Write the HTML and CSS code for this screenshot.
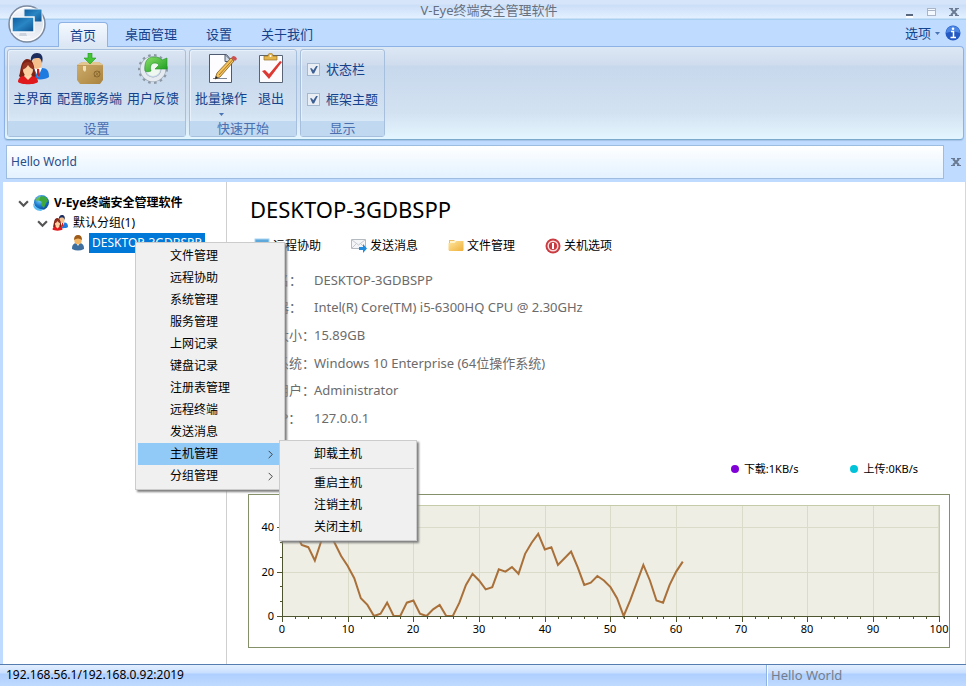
FILE: index.html
```html
<!DOCTYPE html>
<html lang="zh-CN">
<head>
<meta charset="utf-8">
<title>V-Eye终端安全管理软件</title>
<link rel="stylesheet" href="styles.css">
</head>
<body>
<svg class="defs" aria-hidden="true">
  <defs>
    <linearGradient id="screen" x1="0" y1="0" x2="1" y2="1"><stop offset="0" stop-color="#0f5c9c"/><stop offset=".5" stop-color="#2a86c4"/><stop offset="1" stop-color="#0a4f8e"/></linearGradient>
    <linearGradient id="orb" x1="0" y1="0" x2="0" y2="1"><stop offset="0" stop-color="#fafcff"/><stop offset=".5" stop-color="#dde3ec"/><stop offset="1" stop-color="#f4f7fb"/></linearGradient>
    <linearGradient id="green" x1="0" y1="0" x2="1" y2="1"><stop offset="0" stop-color="#8ee06a"/><stop offset="1" stop-color="#149a1c"/></linearGradient>
    <linearGradient id="box" x1="0" y1="0" x2="1" y2="1"><stop offset="0" stop-color="#d0ae6c"/><stop offset="1" stop-color="#a9823f"/></linearGradient>
    <radialGradient id="globe" cx=".4" cy=".3" r=".8"><stop offset="0" stop-color="#8fe0ff"/><stop offset=".5" stop-color="#1f7fd0"/><stop offset="1" stop-color="#073a85"/></radialGradient>
    <linearGradient id="folder" x1="0" y1="0" x2="1" y2="1"><stop offset="0" stop-color="#ffe7a0"/><stop offset="1" stop-color="#efb03a"/></linearGradient>
    <symbol id="users" viewBox="0 0 32 32">
      <path d="M15 24c0-6 2-9 6-9l4 0c5 0 7 3 7 9-3 3-13 3-17 1z" fill="#1f7be0"/>
      <path d="M17 15l4 9 4-9z" fill="#fff"/><path d="M20 16h2l1 6-2 2-1-2z" fill="#c22"/>
      <ellipse cx="20" cy="10" rx="5" ry="6" fill="#f6c08c"/>
      <path d="M14 9c-1-6 2-9 6-9s7 3 5 10c-1-3-1-4-3-5-3 0-5 0-6 1z" fill="#1c2c5c"/>
      <path d="M2 23C4 20 3 7 10 6c8 0 7 12 9 17l-4 3H5z" fill="#7c2314"/>
      <path d="M1 29c0-4 3-6 6-6h7c4 0 7 2 7 6-3 3-17 3-20 0z" fill="#e0191c"/>
      <path d="M7 23l4 4 4-4-2-3H9z" fill="#ffd9b0"/>
      <ellipse cx="11" cy="17" rx="5" ry="6" fill="#fcd0a0"/>
      <path d="M5 17c0-5 2-8 6-8s6 3 6 8c-2-1-5-3-6-5-1 2-3 4-6 5z" fill="#963321"/>
    </symbol>
  </defs>
</svg>

<header class="chrome">
  <div class="titlebar">
    <h1 class="title">V-Eye终端安全管理软件</h1>
    <div class="window-buttons">
      <button type="button" aria-label="最小化"><svg width="9" height="12"><path d="M1 11h7" stroke="#fff" stroke-width="2"/><path d="M1 9h7" stroke="#59677f" stroke-width="2"/></svg></button>
      <button type="button" aria-label="最大化"><svg width="9" height="12"><rect x=".5" y="2.5" width="8" height="7" fill="#f4f8ff" stroke="#a9b4c6"/><path d="M1 4.500h7" stroke="#a9b4c6"/></svg></button>
      <button type="button" aria-label="关闭"><svg width="10" height="12"><path d="M2 3l6 6M8 3L2 9" stroke="#697a92" stroke-width="2"/><path d="M0 2.500h4M6 2.500h4M0 9.500h4M6 9.500h4" stroke="#697a92"/></svg></button>
    </div>
  </div>
  <button class="orb" type="button" aria-label="应用菜单">
    <svg viewBox="0 0 38 38" width="38" height="38"><circle cx="19" cy="19" r="18" fill="url(#orb)" stroke="#7d8ba0" stroke-width="1.500"/><circle cx="19" cy="19" r="16.500" fill="none" stroke="#fff"/>
    <path d="M16 4h18v13H16z" fill="url(#screen)" stroke="#dfe9f4"/><path d="M4 12h22v15H4z" fill="url(#screen)" stroke="#f5f8fc" stroke-width="1.500"/><path d="M12 28h6l1 3h-8z" fill="#cbd3de"/><path d="M10 32h12" stroke="#f8fafc"/></svg>
  </button>
  <nav class="tabs">
    <a class="tab active" href="#">首页</a><a class="tab" href="#">桌面管理</a><a class="tab" href="#">设置</a><a class="tab" href="#">关于我们</a>
    <div class="options">
      <button type="button">选项 <svg width="5" height="3"><path d="M0 0h5L2.500 3z" fill="#4a75b5"/></svg></button>
      <button type="button" aria-label="信息"><svg width="16" height="16"><circle cx="8" cy="8" r="7.500" fill="#2459c4"/><path d="M1 8a7 7 0 0114 0q-7-3-14 0" fill="#4c86e4"/><path d="M6 6.500h2.500v6M5.500 12.500h5.500" stroke="#fff" stroke-width="1.500" fill="none"/><circle cx="8" cy="3.700" r="1.300" fill="#fff"/></svg></button>
    </div>
  </nav>
  <div class="ribbon">
    <section class="group">
      <div class="tools">
        <button class="tool" type="button"><svg class="icon"><use href="#users"/></svg>主界面</button>
        <button class="tool" type="button"><svg class="icon" viewBox="0 0 32 32"><path d="M3 12l5-3h17l4 3v15l-3 4H6l-3-4z" fill="url(#box)"/><path d="M3 12h26l-4-3H8z" fill="#e2c690"/><path d="M3 12h26v1H3z" fill="#c29c5a"/><path d="M9 13h3v4l-1 2-2-2z" fill="#efe0b8"/><circle cx="23" cy="21" r="3" fill="none" stroke="#8a6830"/><path d="M20 24l6-6M21 18l4 6" stroke="#8a6830" stroke-width=".7"/><path d="M14 0h4v5h4l-6 6-6-6h4z" fill="#45c436" stroke="#24971f" stroke-width=".6"/></svg>配置服务端</button>
        <button class="tool" type="button"><svg class="icon" viewBox="0 0 32 32"><circle cx="16" cy="16" r="13.500" fill="none" stroke="#8d98a5" stroke-width="3" stroke-dasharray="2.500 3.340"/><circle cx="16" cy="16" r="10.500" fill="none" stroke="#9aa4b0" stroke-width="5"/><circle cx="16" cy="16" r="10.500" fill="none" stroke="#e5eaf0" stroke-width="4"/><circle cx="16" cy="16" r="7" fill="#eef8ee"/><path d="M8 18C7 9 10 4 17 4c4 0 6 1 8 3l5-2v11H18l4-4c-1-1-2-2-4-2-5 0-5 5-4 8-2 1-5 1-6 0z" fill="url(#green)" stroke="#23912a" stroke-width=".6"/></svg>用户反馈</button>
      </div>
      <h2 class="caption">设置</h2>
    </section>
    <section class="group">
      <div class="tools">
        <button class="tool" type="button"><svg class="icon" viewBox="0 0 32 32"><path d="M4.500 1.500h17l5 6v22h-22z" fill="#fdfdff" stroke="#4e5a70"/><path d="M20 1.500v7h7z" fill="#cfd9e8" stroke="#4e5a70"/><path d="M8 25.500h14" stroke="#7c8798"/><path d="M12 20L26 5l3 3-14 16-5 2z" fill="#f3c25a" stroke="#7d5a22" stroke-width=".8"/><path d="M14 22L28 6.500" stroke="#ad7928"/><path d="M26 5l2-2q3 0 4 3l-2 2z" fill="#cc5050"/><path d="M10 26l1-3 2 2z" fill="#222"/></svg>批量操作<svg class="drop" width="5" height="3"><path d="M0 0h5L2.500 3z" fill="#4a75b5"/></svg></button>
        <button class="tool" type="button"><svg class="icon" viewBox="0 0 32 32"><path d="M4.500 2.500h23v27h-23z" fill="#fcfcff" stroke="#596477"/><path d="M9 3h4c0-4 5-4 5 0h4v4H9z" fill="#e5b64c" stroke="#96702a" stroke-width=".7"/><circle cx="15.500" cy="3" r="1" fill="#fff"/><path d="M7 18l3-1 4 4L25 8l2 1-13 17z" fill="#dd3934"/></svg>退出</button>
      </div>
      <h2 class="caption">快速开始</h2>
    </section>
    <section class="group">
      <div class="checks">
        <label><input type="checkbox" checked>状态栏</label>
        <label><input type="checkbox" checked>框架主题</label>
      </div>
      <h2 class="caption">显示</h2>
    </section>
  </div>
</header>

<div class="message">
  <p class="message-text">Hello World</p>
  <button type="button" aria-label="关闭消息"><svg width="10" height="9"><path d="M2 1l6 6M8 1L2 7" stroke="#697a92" stroke-width="2"/><path d="M0 .5h4M6 .5h4M0 7.500h4M6 7.500h4" stroke="#697a92"/></svg></button>
</div>

<main class="workspace">
  <aside class="sidebar">
    <ul class="tree">
      <li>
        <div class="node root"><svg class="arrow" viewBox="0 0 10 10"><path d="M1 3l4 4 4-4"/></svg>
          <svg class="small" viewBox="0 0 16 16"><circle cx="8.500" cy="7.500" r="7.500" fill="url(#globe)"/><path d="M8 1l5 1 2 4-2 2-2 5-3-3 1-3-4-2z" fill="#3fa83c"/><path d="M3 4l3-2 1 2-3 3z" fill="#66bd4c"/><path d="M0 8q4 7 11 6l-3 2q-8 0-8-8" fill="#5bbcf4"/></svg>
          <span>V-Eye终端安全管理软件</span></div>
        <ul>
          <li>
            <div class="node"><svg class="arrow" viewBox="0 0 10 10"><path d="M1 3l4 4 4-4"/></svg><svg class="small"><use href="#users"/></svg><span>默认分组(1)</span></div>
            <ul>
              <li class="host">
                <div class="node"><svg class="small" viewBox="0 0 16 16"><path d="M2 14c0-5 2-6 6-6s6 1 6 6q-6 3-12 0" fill="#3f6f9f"/><path d="M6 8l2 3 2-3z" fill="#f5ead0"/><circle cx="8" cy="5.500" r="3.700" fill="#f3b765"/><path d="M4 5q0-5 4-5t4 5q-4-3-8 0" fill="#9d5b19"/></svg><span class="selected">DESKTOP-3GDBSPP</span></div>
                <div class="menu context" role="menu">
                  <button role="menuitem">文件管理</button>
                  <button role="menuitem">远程协助</button>
                  <button role="menuitem">系统管理</button>
                  <button role="menuitem">服务管理</button>
                  <button role="menuitem">上网记录</button>
                  <button role="menuitem">键盘记录</button>
                  <button role="menuitem">注册表管理</button>
                  <button role="menuitem">远程终端</button>
                  <button role="menuitem">发送消息</button>
                  <div class="submenu-anchor">
                    <button class="current" role="menuitem">主机管理<svg viewBox="0 0 10 10"><path d="M3 1l4 4-4 4"/></svg></button>
                    <div class="menu submenu" role="menu">
                      <button role="menuitem">卸载主机</button>
                      <hr>
                      <button role="menuitem">重启主机</button>
                      <button role="menuitem">注销主机</button>
                      <button role="menuitem">关闭主机</button>
                    </div>
                  </div>
                  <button role="menuitem">分组管理<svg viewBox="0 0 10 10"><path d="M3 1l4 4-4 4"/></svg></button>
                </div>
              </li>
            </ul>
          </li>
        </ul>
      </li>
    </ul>
  </aside>

  <section class="detail">
    <h2 class="host-name">DESKTOP-3GDBSPP</h2>
    <div class="actions">
      <button type="button"><svg class="small" viewBox="0 0 16 16"><rect x="1" y="1" width="14" height="10" fill="#5da9dc" stroke="#a9d3f0"/><path d="M5 14h6M8 11v3" stroke="#789"/></svg>远程协助</button>
      <button type="button"><svg class="small" viewBox="0 0 16 16"><path d="M.5 1.500h14v9H.5z" fill="#f4f5f7" stroke="#b5bac0"/><path d="M1 2l6.500 5L14 2M1 10l4-4M14 10l-4-4" fill="none" stroke="#c5c9ce"/><path d="M8 9h4V6l4 4.500-4 4.500v-3H8z" fill="#218bdc"/></svg>发送消息</button>
      <button type="button"><svg class="small" viewBox="0 0 16 16"><path d="M1 2h5l1 1h8v10H1z" fill="#f0c064"/><path d="M2 3h12v4L8 8H2z" fill="#fff4c9"/><path d="M.5 5h6l2-2h7v9l-1 1h-13l-1-1z" fill="url(#folder)"/></svg>文件管理</button>
      <button type="button"><svg class="small" viewBox="0 0 16 16"><circle cx="8" cy="8" r="7.500" fill="#c93b40"/><circle cx="8" cy="8" r="4.800" fill="none" stroke="#f8dede" stroke-width="1.500"/><path d="M8 5v6" stroke="#fff" stroke-width="2"/></svg>关机选项</button>
    </div>
    <dl class="info">
      <dt>主机名：</dt><dd>DESKTOP-3GDBSPP</dd>
      <dt>处理器：</dt><dd>Intel(R) Core(TM) i5-6300HQ CPU @ 2.30GHz</dd>
      <dt>内存大小：</dt><dd>15.89GB</dd>
      <dt>操作系统：</dt><dd>Windows 10 Enterprise (64位操作系统)</dd>
      <dt>当前用户：</dt><dd>Administrator</dd>
      <dt>主机IP：</dt><dd>127.0.0.1</dd>
    </dl>
    <ul class="legend">
      <li><i class="dot down"></i>下载:1KB/s</li>
      <li><i class="dot up"></i>上传:0KB/s</li>
    </ul>
    <svg class="chart" viewBox="0 0 702 154" role="img" aria-label="网络流量">
      <rect class="frame" x=".5" y=".5" width="701" height="153"/>
      <rect class="plot" x="34.500" y="11.500" width="657" height="111"/>
      <path class="grid" d="M100.500 12v110M165.500 12v110M231.500 12v110M297.500 12v110M362.500 12v110M428.500 12v110M494.500 12v110M559.500 12v110M625.500 12v110M690.500 12v110M35 78.500h656M35 33.500h656"/>
      <g transform="translate(34 122) scale(6.570 -2.220)">
        <polyline class="series" points="0,42 1,44 2,38 3,32 4,31 5,25 6,34 7,40 8,33 9,27 10,22.500 11,17 12,8 13,5 14,0 15,1 16,6 17,0 18,0 19,6 20,7 21,1 22,0 23,3 24,5 25,0 26,0 27,6 28,14 29,19 30,16 31,12 32,13 33,21 34,20 35,22 36,19 37,28 38,33 39,37 40,30 41,31 42,23 43,26 44,29 45,22 46,14 47,15 48,18 49,16 50,13 51,8 52,0 53,7 54,15 55,23 56,16 57,7 58,6 59,14 60,20 61,24.500"/>
      </g>
      <path class="axis" d="M34.500 11v117M29 122.500h663M29 78.500h5M29 33.500h5M32 107.500h2M32 92.500h2M32 63.500h2M32 48.500h2M100.500 123v5M165.500 123v5M231.500 123v5M297.500 123v5M362.500 123v5M428.500 123v5M494.500 123v5M559.500 123v5M625.500 123v5M691.500 123v5"/>
      <path class="axis" d="M47.500 123v2M60.500 123v2M73.500 123v2M87.500 123v2M113.500 123v2M126.500 123v2M139.500 123v2M152.500 123v2M179.500 123v2M192.500 123v2M205.500 123v2M218.500 123v2M244.500 123v2M257.500 123v2M271.500 123v2M284.500 123v2M310.500 123v2M323.500 123v2M336.500 123v2M349.500 123v2M376.500 123v2M389.500 123v2M402.500 123v2M415.500 123v2M441.500 123v2M454.500 123v2M468.500 123v2M481.500 123v2M507.500 123v2M520.500 123v2M533.500 123v2M546.500 123v2M573.500 123v2M586.500 123v2M599.500 123v2M612.500 123v2M638.500 123v2M651.500 123v2M665.500 123v2M678.500 123v2"/>
      <g class="y-labels"><text x="26" y="37">40</text><text x="26" y="82">20</text><text x="26" y="126">0</text></g>
      <g class="x-labels"><text x="34" y="139">0</text><text x="100" y="139">10</text><text x="165" y="139">20</text><text x="231" y="139">30</text><text x="297" y="139">40</text><text x="362" y="139">50</text><text x="428" y="139">60</text><text x="493" y="139">70</text><text x="559" y="139">80</text><text x="625" y="139">90</text><text x="691" y="139">100</text></g>
    </svg>
  </section>
</main>

<footer class="status"><span>192.168.56.1/192.168.0.92:2019</span><span class="status-message">Hello World</span></footer>
</body>
</html>
```

FILE: styles.css
```css
* { box-sizing: border-box; }
body {
  margin: 0;
  min-height: 100vh;
  display: flex;
  flex-direction: column;
  background: #bfdbff;
  color: #000;
  font: 12px/20px "Noto Sans", "Noto Sans CJK SC", sans-serif;
}
ul, dl, dd, h1, h2, p { margin: 0; padding: 0; }
ul { list-style: none; }
h1, h2 { font-weight: normal; }
button { margin: 0; padding: 0; border: 0; background: none; font: inherit; color: inherit; }
svg { display: block; flex: none; }
.defs { position: absolute; width: 0; height: 0; }
.small { width: 16px; height: 16px; }

.chrome { position: relative; color: #15428b; font-size: 13px; }
.titlebar {
  display: grid;
  grid-template-columns: 1fr auto 1fr;
  height: 20px;
  padding: 0 7px 0 19px;
  background: linear-gradient(#d6e5f9 0 4px, #cbdef8 5px, #e3f0ff 18px, #a9cff0 19px);
}
.title { grid-column: 2; font-size: 13px; line-height: 20px; color: #66707f; }
.window-buttons { display: flex; justify-content: flex-end; align-items: center; gap: 13px; padding-top: 3px; }
.orb { position: absolute; left: 8px; top: 5px; }
.tabs { display: flex; gap: 5px; padding: 2px 5px 0 58px; }
.tab { padding: 0 12px; height: 24px; line-height: 24px; color: inherit; text-decoration: none; }
.tab.active {
  position: relative;
  height: 25px;
  margin-bottom: -1px;
  padding: 0 11px;
  border: 1px solid #8db2e3;
  border-bottom: 0;
  border-radius: 4px 4px 0 0;
  background: linear-gradient(#f4f9ff, #dbe6f4);
}
.options { display: flex; align-items: center; gap: 5px; margin-left: auto; height: 22px; }
.options button { display: flex; align-items: center; gap: 4px; }
.ribbon {
  display: flex;
  gap: 3px;
  margin: 0 2px 0 4px;
  padding: 2px;
  min-height: 94px;
  border: 1px solid #8db2e3;
  border-bottom-color: #7baacb;
  border-radius: 4px;
  background: linear-gradient(#dde8f5 0, #cfdced 18px, #c7d8ed 19px, #d3e2f1 66px, #e4f6ff 92px);
  box-shadow: 0 1px 1px #a5c3e6;
}
.group {
  display: flex;
  flex-direction: column;
  border: 1px solid #a6bfdc;
  border-radius: 3px;
  box-shadow: inset 1px 1px #e8f1fb;
}
.tools { display: flex; flex: 1; gap: 5px; padding: 3px 6px 0 5px; }
.tool { display: flex; flex-direction: column; align-items: center; }
.icon { width: 32px; height: 32px; margin-bottom: 3px; }
.drop { margin-top: 5px; }
.group:nth-child(2) .tools { gap: 8px; padding-right: 9px; }
.caption { height: 15px; font-size: 13px; line-height: 14px; text-align: center; color: #4a70b0; background: #c1d8f1; }
.checks { display: flex; flex: 1; flex-direction: column; gap: 10px; padding: 9px 6px 0; }
.checks label { display: flex; align-items: center; gap: 6px; }
.checks input {
  appearance: none;
  width: 13px;
  height: 13px;
  margin: 0;
  padding: 2px;
  border: 1px solid #a4b8d0;
  background: #e9eef5;
}
.checks input:checked::before {
  content: "";
  display: block;
  width: 8px;
  height: 8px;
  background: #3d5f93;
  clip-path: polygon(0 35%, 20% 35%, 40% 60%, 80% 0, 100% 0, 50% 100%, 30% 100%);
}

.message { display: flex; align-items: center; gap: 7px; padding: 5px 5px 3px 6px; }
.message-text {
  flex: 1;
  height: 34px;
  padding: 0 4px;
  border: 1px solid #9ebbe0;
  background: linear-gradient(#fff, #e3f2ff);
  line-height: 32px;
  color: #284c8c;
}

.workspace {
  display: grid;
  grid-template-columns: 224px 1fr;
  flex: 1;
  margin: 0 1px 0 3px;
  background: #fff;
}
.sidebar { border-right: 1px solid #cfcfcf; padding: 11px 0 0 15px; }
.tree ul { padding-left: 19px; }
.node { display: flex; align-items: center; gap: 4px; height: 20px; white-space: nowrap; }
.node .small { margin-right: 1px; }
.root { font-weight: bold; }
.arrow { width: 11px; height: 11px; fill: none; stroke: #555; stroke-width: 2; }
.host { position: relative; }
.host .node { gap: 2px; padding-left: 14px; }
.selected { padding: 0 3px; background: #0078d7; color: #fff; }

.menu {
  position: absolute;
  z-index: 1;
  padding: 2px;
  border: 1px solid #ccc;
  background: #f0f0f0;
  box-shadow: 2px 2px 2px #808080;
}
.menu button {
  display: flex;
  align-items: center;
  justify-content: space-between;
  width: 100%;
  height: 22px;
  padding: 0 7px 0 32px;
  text-align: left;
}
.menu button svg { width: 9px; height: 9px; fill: none; stroke: #333; stroke-width: 1; }
.menu .current { background: #91c9f7; }
.menu hr { height: 1px; margin: 3px 0 3px 28px; border: 0; background: #d0d0d0; }
.context { top: 9px; left: 79px; width: 150px; }
.submenu-anchor { position: relative; }
.submenu { top: -3px; left: 141px; width: 138px; }

.detail { display: flex; flex-direction: column; min-width: 0; padding: 12px 15px 16px 21px; }
.host-name { padding-left: 2px; font-size: 22px; line-height: 30px; }
.actions { display: flex; gap: 30px; margin-top: 12px; padding-left: 6px; }
.actions button { display: flex; align-items: center; gap: 3px; }
.info {
  display: grid;
  grid-template-columns: 64px 1fr;
  grid-auto-rows: 1fr;
  align-items: center;
  height: 166px;
  margin-top: 10px;
  padding-left: 2px;
  font-size: 13px;
  color: #6b6b6b;
  white-space: nowrap;
}
.legend { display: flex; justify-content: flex-end; gap: 52px; margin: 27px 32px 15px 0; font-size: 11px; }
.legend li { display: flex; align-items: center; gap: 5px; }
.dot { width: 8px; height: 8px; border-radius: 50%; }
.down { background: #8000d8; }
.up { background: #00c3da; }
.chart { width: 100%; height: auto; margin-top: auto; font-size: 11px; }
.frame { fill: #fff; stroke: #84906a; }
.plot { fill: #eeeee4; stroke: #c5cba8; }
.grid { stroke: #dadcc9; }
.series { fill: none; stroke: #a9703a; stroke-width: 2; vector-effect: non-scaling-stroke; }
.axis { stroke: #4c5530; }
.y-labels { text-anchor: end; }
.x-labels { text-anchor: middle; }

.status {
  display: grid;
  grid-template-columns: 1fr 200px;
  height: 22px;
  padding-left: 6px;
  border-top: 1px solid #567db0;
  background: linear-gradient(#e3efff, #c9dfff 8px, #aecfff 9px, #bfdaff);
}
.status-message { padding-left: 4px; border-left: 1px solid #8fb4e4; box-shadow: inset 1px 0 #fff; font-size: 13px; color: #747e8c; }
```
